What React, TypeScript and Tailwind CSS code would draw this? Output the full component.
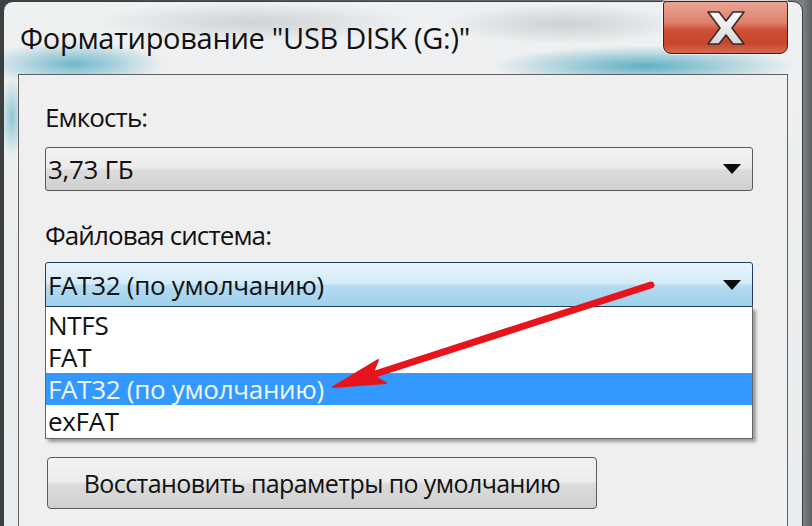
import React from 'react';

const items = ['NTFS', 'FAT', 'FAT32 (по умолчанию)', 'exFAT'];

function DownArrow() {
  return (
    <svg width="18" height="10" viewBox="0 0 18 10" className="shrink-0">
      <path d="M0 0 H18 L9 10 Z" fill="#0b0b0b" />
    </svg>
  );
}

function CloseGlyph() {
  return (
    <svg width="38" height="34" viewBox="-1 -1 38 34">
      <defs>
        <linearGradient id="xg" x1="0" y1="0" x2="0" y2="1">
          <stop offset="0" stopColor="#ffffff" />
          <stop offset="1" stopColor="#d6d6d6" />
        </linearGradient>
      </defs>
      <path
        d="M0 0 H11 L18 9 L25 0 H36 L24 16 L36 32 H25 L18 23 L11 32 H0 L12 16 Z"
        fill="url(#xg)"
        stroke="#3b2a27"
        strokeWidth="1.6"
        strokeLinejoin="round"
      />
    </svg>
  );
}

export default function App() {
  return (
    <div className="relative w-[812px] h-[526px] overflow-hidden bg-[linear-gradient(90deg,#3d3f41_0px,#3d3f41_3px,#7d8184_803px,#5d6063_812px)] font-['Open_Sans','Noto_Sans',sans-serif] text-[#111]">
      {/* window frame */}
      <div className="ml-[3px] mt-[1px] w-[800px] h-[540px] rounded-t-[10px] border border-[#3a3f44] flex flex-col bg-[radial-gradient(ellipse_90px_22px_at_70px_62px,rgba(70,165,190,0.75),transparent),radial-gradient(ellipse_150px_20px_at_640px_64px,rgba(60,160,185,0.8),transparent),radial-gradient(ellipse_12px_40px_at_8px_115px,rgba(80,170,195,0.6),transparent),radial-gradient(ellipse_160px_20px_at_250px_20px,rgba(170,175,178,0.45),transparent),radial-gradient(ellipse_120px_20px_at_560px_22px,rgba(165,170,172,0.45),transparent),linear-gradient(180deg,#eef0f1,#e9ecee)]">
        {/* title bar */}
        <div className="flex items-start h-[72px] shrink-0">
          <div className="pl-[16px] pt-[16px] text-[29px] leading-[40px] tracking-[-0.3px] whitespace-nowrap">
            Форматирование "USB DISK (G:)"
          </div>
          <div className="ml-auto mr-[14px] -mt-[1px] w-[125px] h-[53px] rounded-b-[8px] rounded-t-[3px] border border-[#4a1d14] shadow-[0_0_0_1px_rgba(255,255,255,0.7)] bg-[linear-gradient(180deg,#e9a596_0%,#e0806c_40%,#cf4f36_55%,#c8452e_80%,#d46a50_100%)] flex items-center justify-center">
            <CloseGlyph />
          </div>
        </div>

        {/* client area */}
        <div className="mx-[14px] flex-1 border border-[#5e6164] bg-[#efefef] pl-[26px] pr-[34px] pt-[26px]">
          <div className="text-[26px] leading-[32px] tracking-[-0.9px]">Емкость:</div>

          <div className="mt-[14px] h-[44px] rounded-[3px] border border-[#5a5a5a] bg-[linear-gradient(180deg,#f3f3f3_0%,#ebebeb_48%,#dcdcdc_52%,#d0d0d0_100%)] flex items-center pl-[2px] pr-[11px]">
            <span className="flex-1 text-[26px] leading-[32px] tracking-[-0.3px]">3,73 ГБ</span>
            <DownArrow />
          </div>

          <div className="mt-[28px] text-[26px] leading-[32px] tracking-[-0.9px]">Файловая система:</div>

          <div className="mt-[11px] h-[45px] rounded-t-[3px] border border-[#1f3f5e] bg-[linear-gradient(180deg,#e6f3fb_0%,#d3ebf8_48%,#b5dcf2_52%,#9fd0ec_100%)] flex items-center pl-[2px] pr-[11px]">
            <span className="flex-1 text-[26px] leading-[32px] tracking-[-0.3px]">FAT32 (по умолчанию)</span>
            <DownArrow />
          </div>

          <div className="w-full border border-[#646464] border-t-0 bg-white shadow-[3px_3px_3px_rgba(0,0,0,0.35)] pt-[2px] pb-[1px]">
            {items.map((it, i) => (
              <div
                key={it}
                className={
                  i === 2
                    ? 'h-[32px] flex items-center pl-[2px] bg-[#3399ff] text-[#eef6ff] text-[26px] leading-[30px] tracking-[-0.3px]'
                    : 'h-[32px] flex items-center pl-[2px] text-[26px] leading-[30px] tracking-[-0.3px]'
                }
              >
                {it}
              </div>
            ))}
          </div>

          <div className="mt-[18px] ml-[2px] w-[550px] h-[52px] rounded-[4px] border border-[#5a5a5a] bg-[linear-gradient(180deg,#f3f3f3_0%,#ebebeb_48%,#dcdcdc_52%,#d0d0d0_100%)] flex items-center justify-center text-[25px] leading-[32px] tracking-[-0.6px]">
            Восстановить параметры по умолчанию
          </div>
        </div>
      </div>

      {/* red annotation arrow */}
      <svg className="absolute left-0 top-0 pointer-events-none" width="812" height="526" viewBox="0 0 812 526">
        <line x1="651" y1="285" x2="372" y2="375" stroke="#e8141b" strokeWidth="7" strokeLinecap="round" />
        <path d="M333 387 L378 360 L372 375 L386 383 Z" fill="#e8141b" stroke="#e8141b" strokeWidth="2" strokeLinejoin="round" />
      </svg>
    </div>
  );
}
